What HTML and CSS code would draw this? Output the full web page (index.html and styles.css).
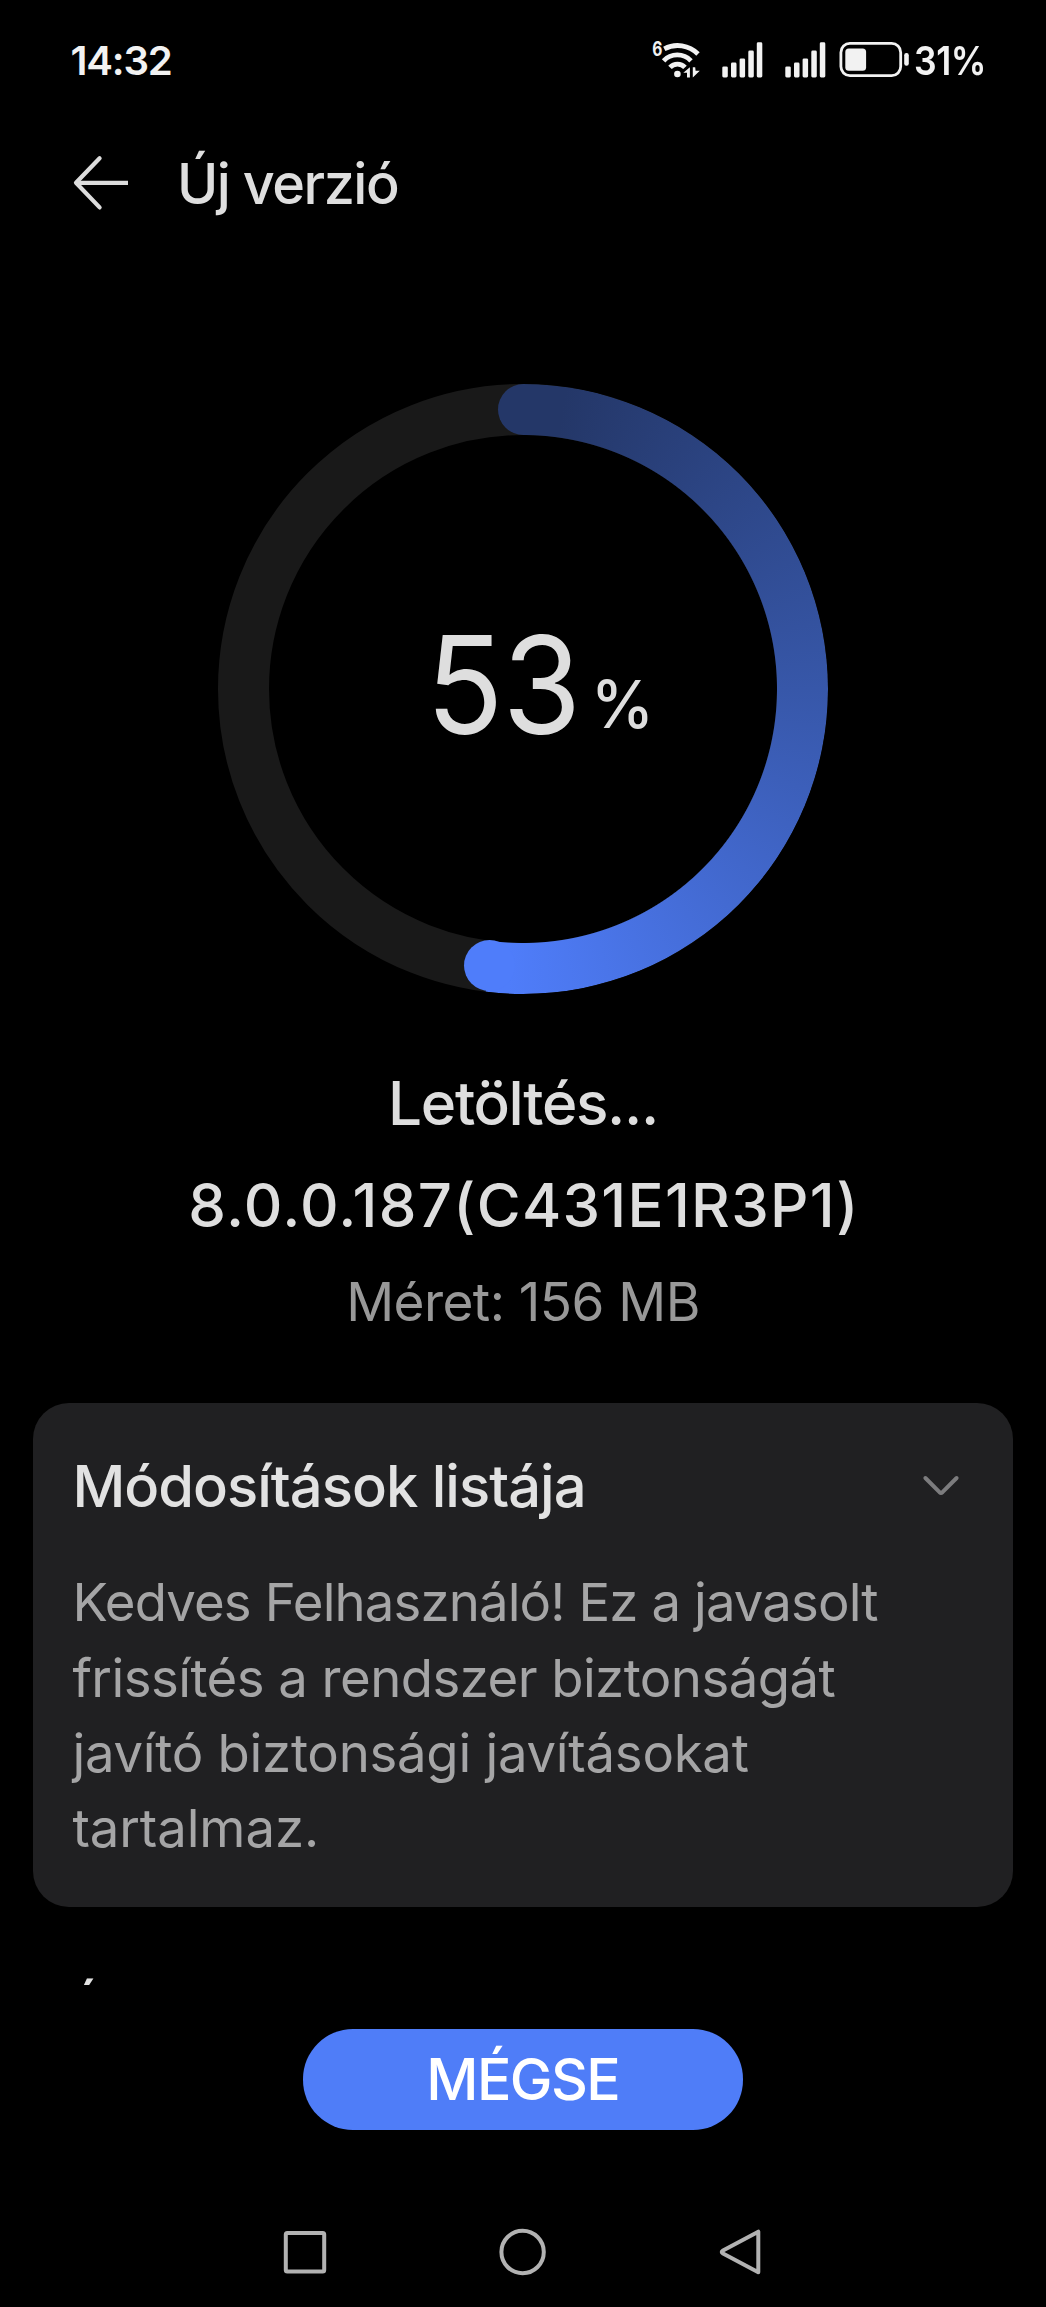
FILE: index.html
```html
<!DOCTYPE html>
<html lang="hu">
<head>
<meta charset="utf-8">
<title>Új verzió</title>
<link rel="stylesheet" href="styles.css">
</head>
<body>
<header class="status">
  <span class="clock">14:32</span>
  <div class="status-icons">
    <svg class="wifi" width="50" height="44" viewBox="650 38 50 44">
      <text class="wifi-gen" transform="translate(651.2 56.4) scale(0.78 1)">6</text>
      <g fill="none" stroke="#f2f2f2" stroke-width="4.8" stroke-linecap="butt">
        <path d="M663.3 48.8A28.8 28.8 0 0 1 697 54"/>
        <path d="M662.6 60.8A19 19 0 0 1 690 60.8"/>
        <path d="M669 67.4A10.2 10.2 0 0 1 684 67.4"/>
      </g>
      <circle cx="676.4" cy="74" r="3.3" fill="#f2f2f2"/>
      <path d="M688.9 67.2V77.4H686V72.8H682.3ZM691.8 67.2H694.2L694.6 70.8H698.8L691.8 77.6Z" fill="#f2f2f2"/>
    </svg>
    <svg class="signal" width="41" height="36" viewBox="0 0 41 36" fill="#f2f2f2">
      <rect x="0.3" y="24.4" width="5.5" height="11" rx="1.4"/><rect x="9" y="20.5" width="5.5" height="14.9" rx="1.4"/><rect x="17.6" y="16.4" width="5.5" height="19" rx="1.4"/><rect x="26.3" y="8.6" width="5.5" height="26.8" rx="1.4"/><rect x="34.8" y="0.3" width="5.5" height="35.1" rx="1.4"/>
    </svg>
    <svg class="signal second" width="41" height="36" viewBox="0 0 41 36" fill="#f2f2f2">
      <rect x="0.3" y="24.4" width="5.5" height="11" rx="1.4"/><rect x="9" y="20.5" width="5.5" height="14.9" rx="1.4"/><rect x="17.6" y="16.4" width="5.5" height="19" rx="1.4"/><rect x="26.3" y="8.6" width="5.5" height="26.8" rx="1.4"/><rect x="34.8" y="0.3" width="5.5" height="35.1" rx="1.4"/>
    </svg>
    <svg class="battery" width="70" height="36" viewBox="838 42 70 36">
      <rect x="839.9" y="43.4" width="59.8" height="32.2" rx="9" fill="none" stroke="#f2f2f2" stroke-width="2.8"/>
      <rect x="844.3" y="48.5" width="20.8" height="22.2" rx="3.5" fill="#f2f2f2"/>
      <rect x="903.2" y="53" width="4.6" height="12.8" rx="2.2" fill="#f2f2f2"/>
    </svg>
    <span class="percent">31%</span>
  </div>
</header>

<nav class="titlebar">
  <svg class="back" width="58" height="56" viewBox="0 0 58 56" fill="none" stroke="#dcdcdc" stroke-width="4.2" stroke-linecap="round" stroke-linejoin="round">
    <path d="M27.6 3.2L4 27.8L27.6 52.4" /><path d="M5 27.8H56" stroke-linecap="butt"/>
  </svg>
  <h1>Új verzió</h1>
</nav>

<main>
  <div class="progress">
    <div class="track"></div>
    <div class="arc"></div>
    <div class="cap cap-start"></div>
    <div class="cap cap-end"></div>
    <div class="value"><span class="number">53</span><span class="sign">%</span></div>
  </div>
  <p class="state">Letöltés...</p>
  <p class="version">8.0.0.187(C431E1R3P1)</p>
  <p class="size">Méret: 156 MB</p>

  <section class="card">
    <div class="card-head">
      <h2>Módosítások listája</h2>
      <svg width="38" height="24" viewBox="0 0 38 24" fill="none" stroke="#7c7c7e" stroke-width="4" stroke-linecap="round" stroke-linejoin="round"><path d="M3.4 4L17.5 18.2Q19 19.5 20.5 18.2L34.6 4"/></svg>
    </div>
    <p class="notes"><span class="l1">Kedves Felhasználó! Ez a javasolt</span><br><span class="l2">frissítés a rendszer biztonságát</span><br><span class="l3">javító biztonsági javításokat</span><br><span class="l4">tartalmaz.</span></p>
  </section>
  <div class="next"><h2>É</h2></div>
</main>

<footer>
  <button class="cancel">MÉGSE</button>
  <div class="system-nav">
    <svg width="48" height="50" viewBox="281 2226.5 48 50" fill="none" stroke="#b2b2b2" stroke-width="4"><rect x="285.8" y="2232.5" width="38.4" height="38.4" rx="1.5"/></svg>
    <svg width="50" height="50" viewBox="498 2226.5 50 50" fill="none" stroke="#b2b2b2" stroke-width="4"><circle cx="522.6" cy="2251.5" r="21.2"/></svg>
    <svg width="48" height="50" viewBox="716 2226.5 48 50" fill="none" stroke="#b2b2b2" stroke-width="4" stroke-linejoin="round"><path d="M758.3 2231.2V2271.8L723 2253Q720.5 2251.5 723 2250Z"/></svg>
  </div>
</footer>
</body>
</html>
```
FILE: styles.css
```css
* { box-sizing: border-box; margin: 0; padding: 0; }

body {
  width: 1046px;
  height: 2307px;
  display: flex;
  flex-direction: column;
  overflow: hidden;
  background: #000;
  color: #dedede;
  font-family: Inter, "Liberation Sans", sans-serif;
  font-weight: 500;
}

svg { display: block; flex: none; }

.status {
  height: 120px;
  display: flex;
  align-items: center;
  justify-content: space-between;
  padding: 0 60px 0 70.5px;
  color: #f2f2f2;
  font-size: 40.2px;
}
.clock { font-weight: 600; letter-spacing: -1.2px; }
.status-icons { display: flex; align-items: center; }
.wifi-gen { font: 700 20px Inter, sans-serif; fill: #f2f2f2; }
.signal { margin-left: 21px; }
.signal.second { margin-left: 22px; }
.battery { margin-left: 13px; }
.percent {
  width: 72px;
  margin-left: 5px;
  font-weight: 600;
  letter-spacing: -0.5px;
  white-space: nowrap;
  transform: scaleX(0.885);
  transform-origin: left;
}

.titlebar {
  height: 126px;
  display: flex;
  align-items: center;
  padding-left: 72px;
}
h1 {
  margin-left: 47px;
  font-size: 55.8px;
  font-weight: 500;
  letter-spacing: -1.49px;
}

main { height: 1739px; overflow: hidden; text-align: center; }

.progress {
  position: relative;
  width: 610px;
  height: 610px;
  margin: 137.5px 0 0 218.3px;
}
.track, .arc { position: absolute; inset: 0; border-radius: 50%; }
.track { border: 51px solid #191919; }
.arc {
  background: conic-gradient(#243768 0deg, #243768 8deg, #3757a9 90deg, #4f7dfa 183deg, #4f7dfa 187deg, transparent 187.1deg);
  -webkit-mask: radial-gradient(circle closest-side, transparent 253.5px, #000 254.5px);
  mask: radial-gradient(circle closest-side, transparent 253.5px, #000 254.5px);
}
.cap { position: absolute; width: 51px; height: 51px; border-radius: 50%; }
.cap-start { left: 279.5px; top: 0; background: linear-gradient(90deg, #243768 52%, transparent 52%); }
.cap-end { left: 245.4px; top: 556.8px; background: #4f7dfa; }
.value {
  position: absolute;
  inset: 0;
  display: flex;
  align-items: baseline;
  padding: 220px 0 0 208px;
  line-height: 163px;
}
.number {
  width: 168px;
  text-align: left;
  font-size: 135.5px;
  font-weight: 400;
  letter-spacing: -1px;
  transform: scaleX(0.94);
  transform-origin: left;
}
.sign { position: relative; top: -6px; left: -4px; font-size: 65.4px; font-weight: 500; transform: scaleX(0.97); }

.state { margin-top: 59.5px; font-size: 60.3px; line-height: 101.5px; letter-spacing: -1.34px; }
.version { padding-left: 2px; font-size: 59.9px; line-height: 101.5px; letter-spacing: 1.31px; }
.size { color: #989898; font-size: 53.1px; font-weight: 400; line-height: 92.8px; letter-spacing: -0.56px; }

.card {
  width: 979.5px;
  height: 504px;
  margin: 54px 0 0 33.4px;
  padding: 48px 52.5px 0 39px;
  border-radius: 36px;
  background: #202022;
  text-align: left;
}
.card-head { display: flex; align-items: center; justify-content: space-between; }
h2 { color: #e2e2e2; font-size: 57.9px; font-weight: 500; line-height: 70px; letter-spacing: -0.98px; }
.notes {
  margin-top: 44.5px;
  color: #a5a5a6;
  font-size: 52.7px;
  font-weight: 400;
  line-height: 75.3px;
  white-space: nowrap;
}
.l1 { letter-spacing: -0.88px; }
.l2 { letter-spacing: -0.55px; }
.l3 { letter-spacing: -0.27px; }
.l4 { letter-spacing: -0.1px; }
.next { padding: 70px 0 0 67.5px; text-align: left; }

footer { height: 322px; padding-top: 44px; }
.cancel {
  display: block;
  width: 440px;
  height: 100.5px;
  margin-left: 302.8px;
  border: 0;
  border-radius: 50px;
  background: #4f7df8;
  color: #fff;
  font: 500 57.2px Inter, "Liberation Sans", sans-serif;
  letter-spacing: -1.59px;
}
.system-nav { display: flex; justify-content: space-between; width: 483px; margin: 97px 0 0 281px; }
```
